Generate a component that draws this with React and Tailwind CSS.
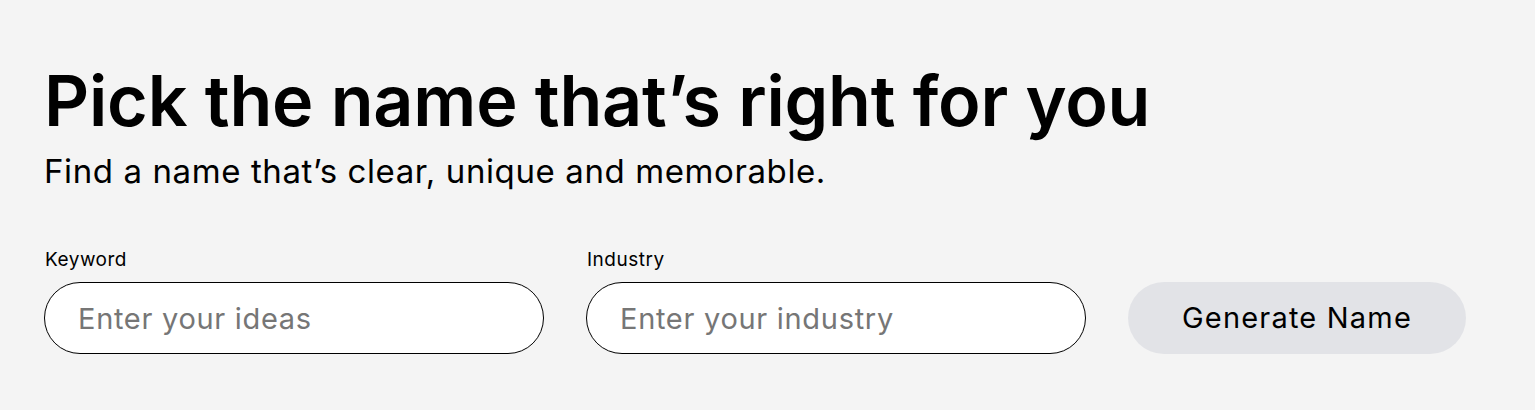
export default function App() {
  return (
    <div className="min-h-screen w-full bg-[#f4f4f4] font-['Inter',sans-serif] text-black">
      <div className="px-[44px] pt-[61px]">
        <h1 className="text-[70px] font-semibold leading-[80px] tracking-[-0.2px]">
          Pick the name that’s right for you
        </h1>
        <p className="mt-[10px] text-[33px] leading-[40px] font-normal tracking-[0.6px]">
          Find a name that’s clear, unique and memorable.
        </p>
        <form className="mt-[57px] flex items-end gap-[42px]">
          <div className="flex flex-col">
            <label className="mb-[10px] text-[19px] leading-[24px] pl-[1px] tracking-[0.5px]">Keyword</label>
            <input
              type="text"
              placeholder="Enter your ideas"
              className="h-[72px] w-[500px] rounded-full border border-black bg-white px-[33px] text-[29px] tracking-[0.7px] placeholder:text-[#767676] outline-none"
            />
          </div>
          <div className="flex flex-col">
            <label className="mb-[10px] text-[19px] leading-[24px] pl-[1px] tracking-[0.5px]">Industry</label>
            <input
              type="text"
              placeholder="Enter your industry"
              className="h-[72px] w-[500px] rounded-full border border-black bg-white px-[33px] text-[29px] tracking-[0.7px] placeholder:text-[#767676] outline-none"
            />
          </div>
          <button
            type="button"
            className="h-[72px] w-[338px] rounded-full bg-[#e2e3e7] text-[29px] tracking-[1.2px] text-black"
          >
            Generate Name
          </button>
        </form>
      </div>
    </div>
  );
}
